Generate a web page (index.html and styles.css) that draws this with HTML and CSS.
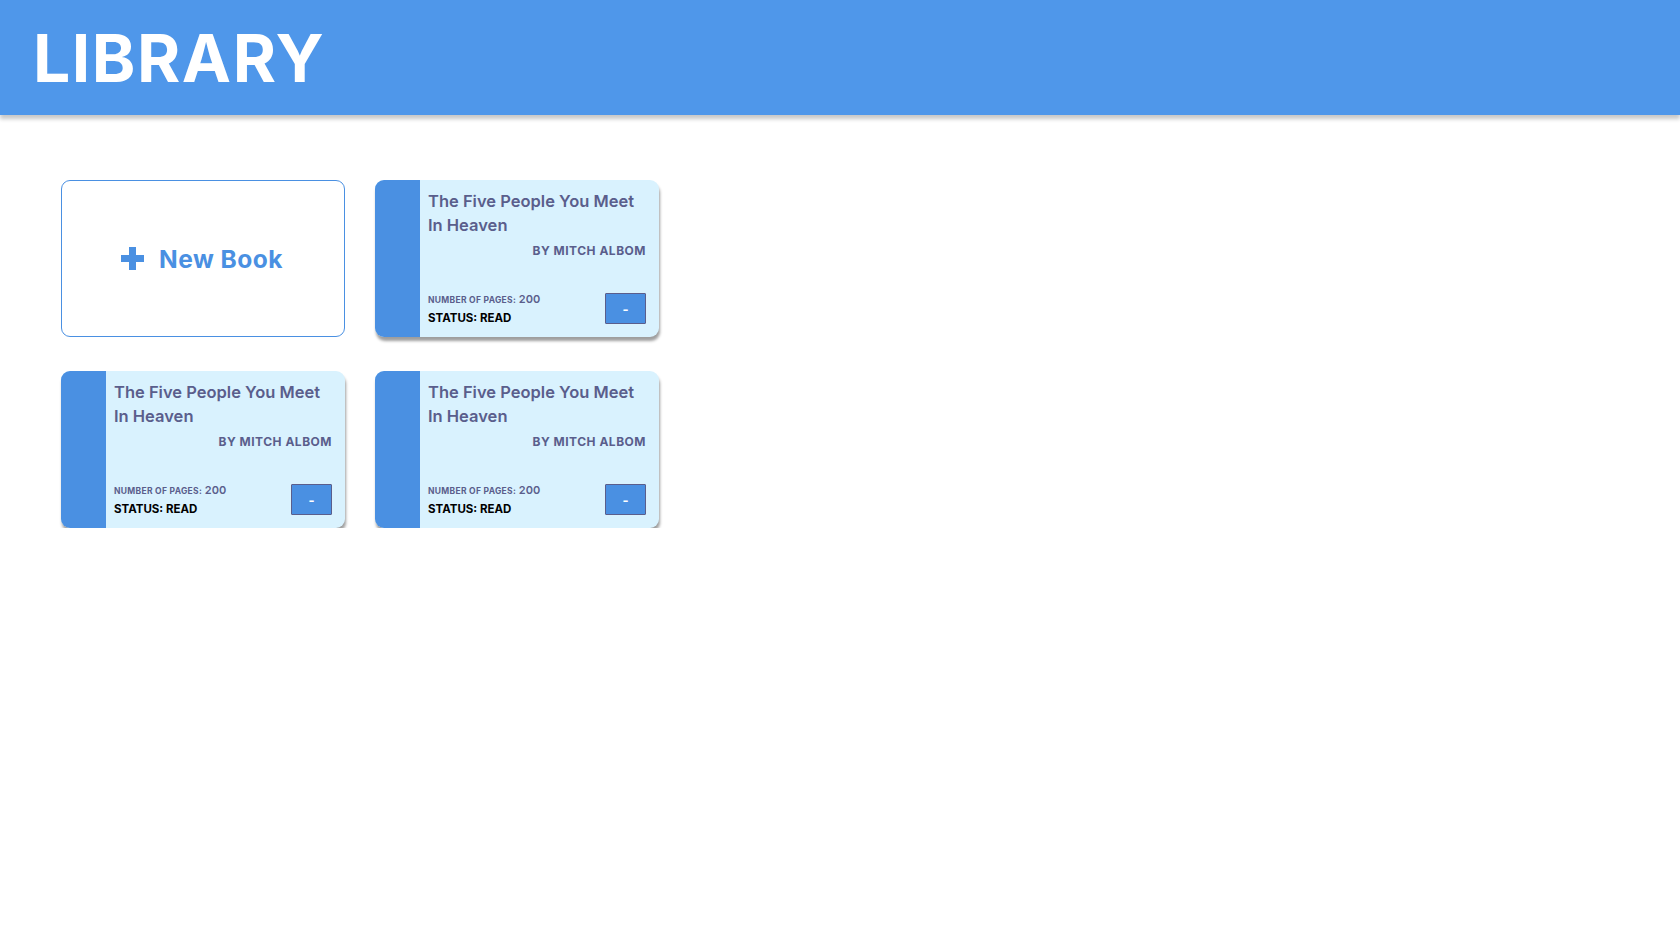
FILE: index.html
```html
<!DOCTYPE html>
<html>
<head>
<meta charset="utf-8">
<link rel="stylesheet" href="styles.css">
</head>
<body>
<header class="header"><h1 class="logo">LIBRARY</h1></header>
<main class="grid">
  <button class="new-book"><svg class="plus" width="23" height="23" viewBox="0 0 23 23"><path d="M8 0h7v8h8v7h-8v8H8v-8H0V8h8z" fill="#4a90e2"/></svg><span>New Book</span></button>
  <div class="book">
    <div class="spine"></div>
    <div class="info">
      <div class="title">The Five People You Meet In Heaven</div>
      <div class="author">BY MITCH ALBOM</div>
      <div class="bottom">
        <div class="meta">
          <div class="pages"><span class="lbl">NUMBER OF PAGES:</span> 200</div>
          <div class="status">STATUS: READ</div>
        </div>
        <button class="remove">-</button>
      </div>
    </div>
  </div>
  <div class="book">
    <div class="spine"></div>
    <div class="info">
      <div class="title">The Five People You Meet In Heaven</div>
      <div class="author">BY MITCH ALBOM</div>
      <div class="bottom">
        <div class="meta">
          <div class="pages"><span class="lbl">NUMBER OF PAGES:</span> 200</div>
          <div class="status">STATUS: READ</div>
        </div>
        <button class="remove">-</button>
      </div>
    </div>
  </div>
  <div class="book">
    <div class="spine"></div>
    <div class="info">
      <div class="title">The Five People You Meet In Heaven</div>
      <div class="author">BY MITCH ALBOM</div>
      <div class="bottom">
        <div class="meta">
          <div class="pages"><span class="lbl">NUMBER OF PAGES:</span> 200</div>
          <div class="status">STATUS: READ</div>
        </div>
        <button class="remove">-</button>
      </div>
    </div>
  </div>
</main>
</body>
</html>
```
FILE: styles.css
```css
* { box-sizing: border-box; }
body {
  margin: 0;
  font-family: "Inter", "DejaVu Sans", sans-serif;
  background: #fff;
}
.header {
  height: 115px;
  background: #4f97ea;
  box-shadow: 0 4px 4px rgba(0,0,0,0.22);
  display: flex;
  align-items: center;
  padding-left: 33px;
}
.logo {
  margin: 0;
  color: #fff;
  font-size: 66px;
  font-weight: 700;
  letter-spacing: 1.5px;
  line-height: 1;
}
.grid {
  display: grid;
  grid-template-columns: repeat(2, 284px);
  grid-auto-rows: 157px;
  column-gap: 30px;
  row-gap: 34px;
  padding: 65px 0 0 61px;
}
.new-book {
  background: #fff;
  border: 1px solid #4a90e2;
  border-radius: 9px;
  display: flex;
  align-items: center;
  justify-content: center;
  gap: 15px;
  color: #4a90e2;
  font-family: inherit;
  font-weight: 700;
  font-size: 24.5px;
  letter-spacing: 0.5px;
  padding: 0;
  padding-right: 2px;
}
.plus { flex: none; }
.book {
  display: flex;
  background: #d9f2fe;
  border-radius: 9px;
  overflow: hidden;
  box-shadow: 1px 4px 3px rgba(0,0,0,0.38);
}
.spine {
  width: 45px;
  background: #4a90e2;
  flex: none;
}
.info {
  flex: 1;
  padding: 9px 13px 12px 8px;
  display: flex;
  flex-direction: column;
}
.title {
  color: #5a5e8c;
  font-size: 16.5px;
  font-weight: 600;
  line-height: 24px;
}
.author {
  color: #5a5e8c;
  font-size: 12px;
  font-weight: 700;
  letter-spacing: 0.5px;
  text-align: right;
  margin-top: 6px;
}
.bottom {
  margin-top: auto;
  display: flex;
  align-items: flex-end;
  justify-content: space-between;
}
.pages {
  color: #5a5e8c;
  font-size: 11px;
  font-weight: 600;
}
.lbl { font-size: 8.5px; font-weight: 700; letter-spacing: 0.3px; }
.status {
  color: #000;
  font-size: 11.5px;
  font-weight: 700;
  margin-top: 5px;
}
.remove {
  width: 41px;
  height: 31px;
  background: #4a90e2;
  border: 1px solid #5a5e8c;
  border-radius: 1px;
  color: #fff;
  font-weight: 700;
  font-size: 13px;
  font-family: inherit;
  margin-bottom: 1px;
  padding: 0;
}
```
